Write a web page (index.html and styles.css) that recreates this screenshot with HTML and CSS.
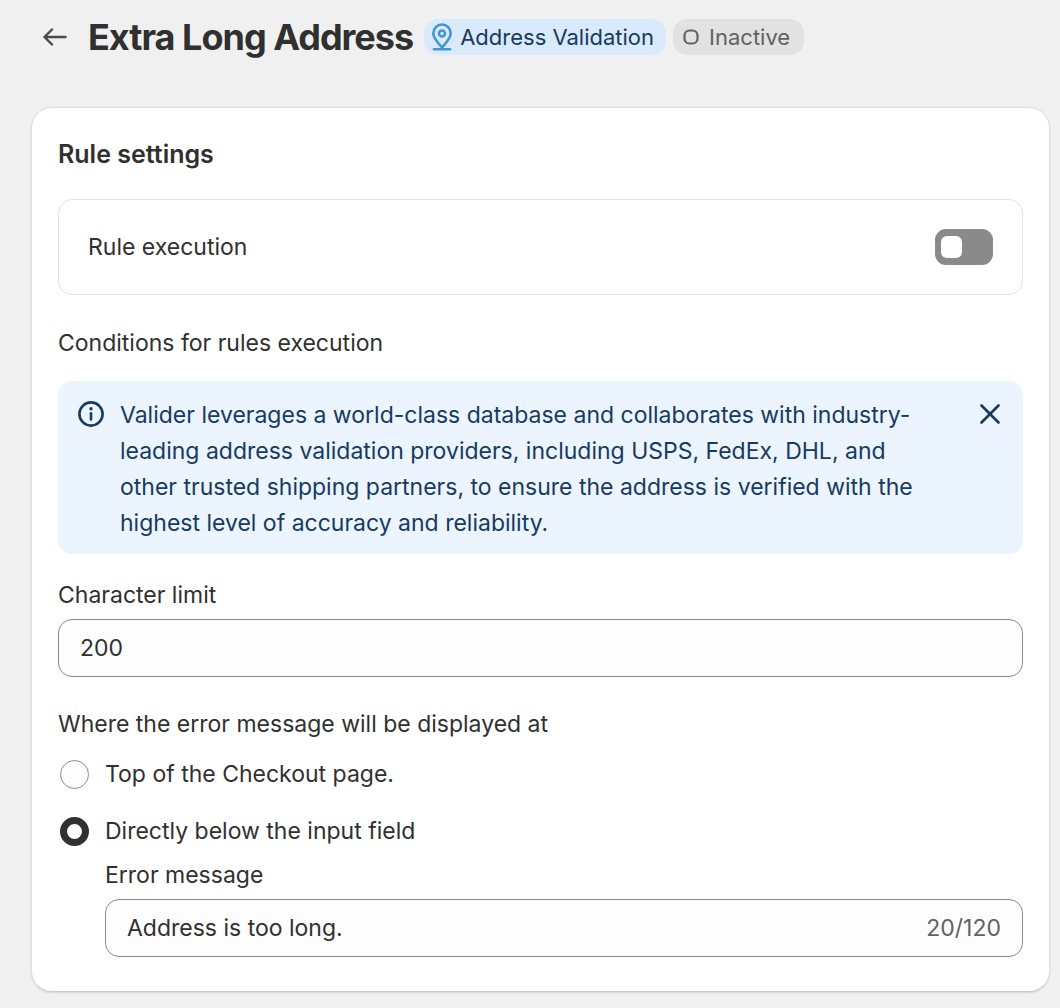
FILE: index.html
```html
<!DOCTYPE html>
<html lang="en">
<head>
    <meta charset="UTF-8">
    <meta name="viewport" content="width=device-width, initial-scale=1.0">
    <title>Extra Long Address</title>
    <link rel="stylesheet" href="styles.css">
</head>
<body>
    <header class="page-header">
        <a class="back-link" href="#" aria-label="Back">
            <svg width="24" height="18" viewBox="0 0 24 18" fill="none" stroke="#4a4a4a" stroke-width="2.4" stroke-linecap="round" stroke-linejoin="round">
                <path d="M22.5 9H1.5M9 1.5L1.5 9L9 16.5"/>
            </svg>
        </a>
        <h1>Extra Long Address</h1>
        <div class="badges">
            <span class="badge badge-info">
                <svg width="20" height="28" viewBox="0 0 20 28" fill="none" stroke="#4295d5" stroke-width="2.6" stroke-linecap="round" stroke-linejoin="round">
                    <path d="M10 24.5C6.5 20.5 1.3 15.3 1.3 10.2a8.7 8.7 0 0 1 17.4 0C18.7 15.3 13.5 20.5 10 24.5Z"/>
                    <circle cx="10" cy="10.5" r="3"/>
                    <path d="M2 26.3H18"/>
                </svg>
                Address Validation
            </span>
            <span class="badge badge-inactive">
                <svg width="16" height="16" viewBox="0 0 16 16" fill="none" stroke="#616161" stroke-width="2.2">
                    <rect x="1.5" y="1.5" width="13" height="13" rx="5"/>
                </svg>
                Inactive
            </span>
        </div>
    </header>

    <main class="card">
        <h2>Rule settings</h2>

        <div class="rule-box">
            <label for="ruleExecution">Rule execution</label>
            <input class="switch" type="checkbox" id="ruleExecution">
        </div>

        <h3>Conditions for rules execution</h3>

        <div class="banner">
            <svg class="banner-icon" width="26" height="26" viewBox="0 0 26 26" fill="none">
                <circle cx="13" cy="13" r="11.6" stroke="#173b5f" stroke-width="2.6"/>
                <circle cx="13" cy="7.8" r="1.7" fill="#173b5f"/>
                <path d="M13 12.3V18.5" stroke="#173b5f" stroke-width="2.6" stroke-linecap="round"/>
            </svg>
            <p>Valider leverages a world-class database and collaborates with industry-leading address validation providers, including USPS, FedEx, DHL, and other trusted shipping partners, to ensure the address is verified with the highest level of accuracy and reliability.</p>
            <button class="banner-close" type="button" aria-label="Dismiss">
                <svg width="20" height="20" viewBox="0 0 20 20" fill="none" stroke="#173b5f" stroke-width="2.6" stroke-linecap="round">
                    <path d="M1.5 1.5L18.5 18.5M18.5 1.5L1.5 18.5"/>
                </svg>
            </button>
        </div>

        <div class="field">
            <label for="charLimit">Character limit</label>
            <div class="input-box">
                <input type="text" id="charLimit" value="200">
            </div>
        </div>

        <fieldset class="choices">
            <legend>Where the error message will be displayed at</legend>
            <div class="choice">
                <input type="radio" name="position" id="posTop">
                <label for="posTop">Top of the Checkout page.</label>
            </div>
            <div class="choice">
                <input type="radio" name="position" id="posField" checked>
                <label for="posField">Directly below the input field</label>
            </div>
            <div class="field nested">
                <label for="errorMessage">Error message</label>
                <div class="input-box">
                    <input type="text" id="errorMessage" value="Address is too long." maxlength="120">
                    <span class="counter">20/120</span>
                </div>
            </div>
        </fieldset>
    </main>
</body>
</html>
```
FILE: styles.css
```css
* {
    box-sizing: border-box;
}

body {
    margin: 0;
    padding: 19px 10px 16px 31px;
    background-color: #f0f0f0;
    color: #303030;
    font-family: Inter, sans-serif;
    font-size: 23px;
    line-height: 36px;
}

h1, h2, h3, p {
    margin: 0;
}

.page-header {
    display: flex;
    align-items: center;
    padding-left: 12px;
    margin-bottom: 52px;
}

.back-link {
    display: flex;
    margin-right: 21px;
}

h1 {
    margin-right: 11px;
    font-size: 36px;
    font-weight: 700;
    line-height: 36px;
    letter-spacing: -1px;
}

.badges {
    display: flex;
    gap: 7px;
}

.badge {
    display: flex;
    align-items: center;
    height: 36px;
    padding: 0 12px 0 8px;
    border-radius: 14px;
    font-size: 22px;
    white-space: nowrap;
}

.badge-info {
    gap: 8px;
    background-color: #d9eafd;
    color: #173b5f;
}

.badge-inactive {
    gap: 10px;
    padding: 0 14px 0 10px;
    background-color: #e2e2e2;
    color: #616161;
}

.card {
    padding: 28px 26px 34px;
    background-color: #fff;
    border: 1px solid #dedede;
    border-bottom-color: #cccccc;
    border-radius: 21px;
    box-shadow: 0 1px 2px #d4d4d4;
}

h2 {
    font-size: 25px;
    font-weight: 600;
    line-height: 36px;
}

.rule-box {
    display: flex;
    align-items: center;
    justify-content: space-between;
    margin: 27px 0 30px;
    padding: 29px;
    border: 1px solid #e3e3e3;
    border-radius: 14px;
}

.switch {
    appearance: none;
    display: flex;
    align-items: center;
    width: 58px;
    height: 36px;
    margin: 0;
    padding: 6px;
    background-color: #8a8a8a;
    border-radius: 11px;
}

.switch::before {
    content: "";
    width: 21px;
    height: 22px;
    background-color: #fff;
    border-radius: 6px;
}

.switch:checked {
    justify-content: flex-end;
    background-color: #303030;
}

h3 {
    font-size: 23px;
    font-weight: 400;
    line-height: 36px;
}

.banner {
    display: flex;
    align-items: flex-start;
    margin: 20px 0 23px;
    padding: 16px 23px 13px 20px;
    background-color: #ebf4ff;
    border-radius: 14px;
    color: #173b5f;
}

.banner-icon {
    flex: none;
    margin: 4px 16px 0 0;
}

.banner p {
    flex: 1;
}

.banner-close {
    display: flex;
    margin: 7px 0 0 48px;
    padding: 0;
    border: none;
    background: none;
}

.field label {
    display: block;
    margin-bottom: 6px;
}

.input-box {
    display: flex;
    align-items: center;
    height: 58px;
    padding: 0 21px;
    background-color: #fdfdfd;
    border: 1px solid #8a8a8a;
    border-radius: 14px;
}

.input-box input {
    flex: 1;
    min-width: 0;
    padding: 0;
    border: none;
    outline: none;
    background: none;
    color: inherit;
    font: inherit;
}

.counter {
    color: #616161;
}

.choices {
    min-width: 0;
    margin: 29px 0 0;
    padding: 0;
    border: none;
}

.choices legend {
    padding: 0;
    margin-bottom: 14px;
}

.choice {
    display: flex;
    align-items: center;
    gap: 16px;
    padding-left: 2px;
    margin-bottom: 21px;
}

.choice input {
    appearance: none;
    width: 29px;
    height: 29px;
    margin: 0;
    background-color: #fdfdfd;
    border: 1px solid #8a8a8a;
    border-radius: 50%;
}

.choice input:checked {
    border: 7px solid #303030;
}

.nested {
    margin-top: -13px;
    padding-left: 47px;
}
```
